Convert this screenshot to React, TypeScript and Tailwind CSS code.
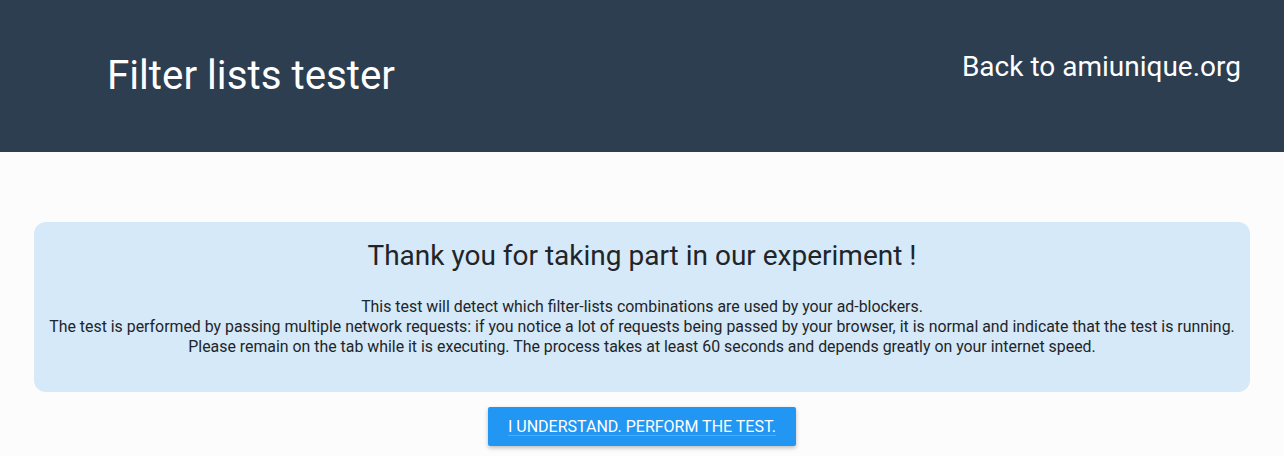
import React from "react";

export default function App() {
  return (
    <div className="min-h-[456px] bg-[#fcfcfc] text-[#212529]" style={{ fontFamily: "Roboto, 'Liberation Sans', sans-serif" }}>
      <header className="h-[152px] bg-[#2c3e50] flex items-start justify-between pl-[107px] pr-[44px]">
        <h1 className="text-[40.3px] leading-none text-white font-normal mt-[56px]">Filter lists tester</h1>
        <a className="text-[28px] leading-none text-white mt-[53px] mr-[-1px]">Back to amiunique.org</a>
      </header>
      <main className="px-[34px] pt-[70px] flex flex-col items-center">
        <div className="w-full rounded-[12px] bg-[#d6e9f8] pt-[18px] pb-[35px] text-center">
          <h2 className="text-[28px] leading-[32px] font-normal text-[#212529]">Thank you for taking part in our experiment !</h2>
          <p className="mt-[25px] text-[15.88px] leading-[20px] text-[#212529]">
            This test will detect which filter-lists combinations are used by your ad-blockers.
            <br />
            The test is performed by passing multiple network requests: if you notice a lot of requests being passed by your browser, it is normal and indicate that the test is running.
            <br />
            Please remain on the tab while it is executing. The process takes at least 60 seconds and depends greatly on your internet speed.
          </p>
        </div>
        <button className="mt-[15px] h-[39px] px-[20px] bg-[#2196f3] text-white text-[16px] uppercase rounded-[2px] shadow-[0_2px_4px_rgba(0,0,0,0.25)] underline decoration-[#26c6da] underline-offset-[3px]">
          I understand. Perform the test.
        </button>
      </main>
    </div>
  );
}
